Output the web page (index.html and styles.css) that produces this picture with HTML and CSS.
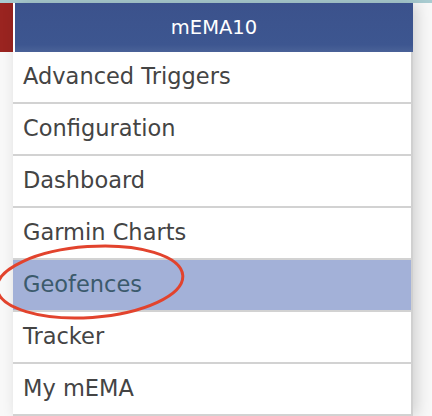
FILE: index.html
```html
<!DOCTYPE html>
<html>
<head>
<meta charset="utf-8">
<link rel="stylesheet" href="styles.css">
</head>
<body>
<div class="topstrip"></div>
<div class="layout">
  <div class="side"><div class="redbar"></div></div>
  <div class="panel">
    <div class="header">mEMA10</div>
    <div class="row">Advanced Triggers</div>
    <div class="row">Configuration</div>
    <div class="row">Dashboard</div>
    <div class="row">Garmin Charts</div>
    <div class="row active">Geofences</div>
    <div class="row">Tracker</div>
    <div class="row">My mEMA</div>
  </div>
</div>
<svg class="ring" width="220" height="100" viewBox="0 0 220 100">
  <ellipse cx="100" cy="43" rx="93" ry="35.5" transform="rotate(-4 100 43)" fill="none" stroke="#e2432d" stroke-width="3"/>
</svg>
</body>
</html>
```
FILE: styles.css
```css
html, body {
  margin: 0;
  padding: 0;
  background: #f8f8f8;
  width: 432px;
  height: 416px;
  overflow: hidden;
  font-family: "DejaVu Sans", "Open Sans", sans-serif;
}
.topstrip {
  height: 3px;
  background: #a9ccd1;
}
.layout {
  display: flex;
}
.side {
  width: 13px;
  flex: none;
}
.redbar {
  height: 49px;
  background: #9a2420;
}
.panel {
  width: 400px;
  flex: none;
  background: #fff;
  box-shadow: 4px 0 14px rgba(0,0,0,0.16);
}
.header {
  height: 49px;
  margin-left: 2px;
  background: linear-gradient(#3b528c, #3d5690 85%, #4a6298);
  color: #fff;
  font-size: 19.5px;
  line-height: 49px;
  text-align: center;
}
.row {
  height: 50px;
  line-height: 49px;
  padding-left: 10px;
  border-bottom: 2px solid #d2d2d2;
  border-right: 2px solid #d0d0d0;
  color: #444;
  font-size: 22.5px;
}
.row.active {
  background: #a3b1d8;
  color: #3b5a6c;
}
.ring {
  position: absolute;
  left: -10px;
  top: 239px;
}
```
